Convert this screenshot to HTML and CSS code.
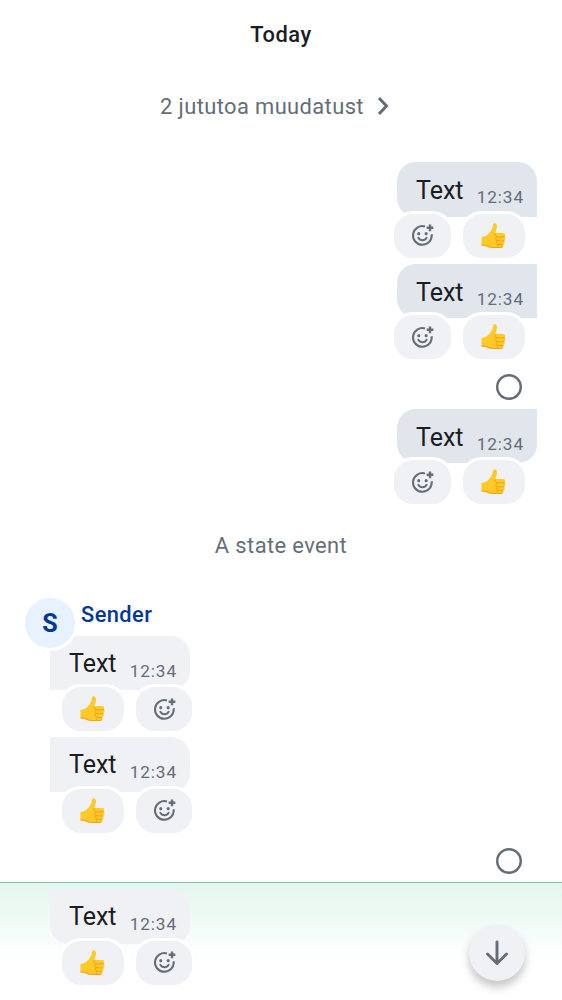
FILE: index.html
```html
<!DOCTYPE html>
<html lang="et">
<head>
<meta charset="utf-8">
<title>Timeline</title>
<link rel="stylesheet" href="styles.css">
</head>
<body>
<svg class="defs" aria-hidden="true">
  <symbol id="thumb" viewBox="0 0 26 28">
    <path d="M1.5 14.8Q4.5 14.7 6.7 13.2C9.1 11.4 11.7 8.4 12.5 5.7L13 2.8C13.3.4 16.9.8 17 4.2C17.1 7.1 15.5 9.4 15.3 10.9H22.7C25.1 10.9 25.8 13 24.7 14.4C25.9 15.7 25.5 17.7 24.3 18.6C25.1 20 24.5 21.8 23.2 22.4C23.8 24.4 22.6 26 20.5 26H13.3C9.5 26 7.5 24.4 5.4 23.7L1.5 23.6Z" fill="#ffc928"/>
    <path d="M1.5 23.6L5.4 23.7C7.5 24.4 9.5 26 13.3 26H20.5C22.3 26 23.4 24.8 23.2 23.2C22.4 24.8 21.5 25 19.8 25H13.3C9.6 25 7.3 22.7 4.6 22.5L1.5 22.4Z" fill="#f2a51b"/>
    <path d="M15.3 11.2C14.8 12.9 15.3 14.4 17 14.8C15.4 15.9 15.4 17.7 17 18.5C15.8 19.6 16.2 21.5 17.6 22.1C16.8 23.1 17.1 24.5 18.1 25M17 14.8Q21 15.6 24.6 14.4M17 18.5Q21 19.5 24.2 18.6M17.6 22.1Q20.5 23 23.1 22.4" fill="none" stroke="#eda116" stroke-width="1"/>
  </symbol>
  <symbol id="react" viewBox="0 0 24 24">
    <path d="M14.4 3.3A9 9 0 1 0 20.8 10.8" fill="none" stroke="#656d77" stroke-width="2"/>
    <path d="M19.2 1.4V7.8M16 4.6H22.4" stroke="#656d77" stroke-width="2.3"/>
    <circle cx="8.4" cy="10.2" r="1.5" fill="#656d77"/>
    <circle cx="15.5" cy="10.2" r="1.5" fill="#656d77"/>
    <path d="M8 14.2Q9.3 16.5 12 16.5T16 14.2" fill="none" stroke="#656d77" stroke-width="1.9" stroke-linecap="round"/>
  </symbol>
</svg>
<main class="timeline">
  <h1 class="day">Today</h1>
  <div class="changes"><span>2 jututoa muudatust</span>
    <svg class="chevron" viewBox="0 0 12 20"><path d="M2 2L9.5 10L2 18" fill="none" stroke="#656d77" stroke-width="3"/></svg>
  </div>
  <section class="group mine">
    <article class="message">
      <div class="bubble first"><span class="body">Text</span><time>12:34</time></div>
      <div class="reactions"><span class="pill add"><svg class="react"><use href="#react"/></svg></span><span class="pill"><svg class="thumb"><use href="#thumb"/></svg></span></div>
    </article>
    <article class="message">
      <div class="bubble middle"><span class="body">Text</span><time>12:34</time></div>
      <div class="reactions"><span class="pill add"><svg class="react"><use href="#react"/></svg></span><span class="pill"><svg class="thumb"><use href="#thumb"/></svg></span></div>
    </article>
    <div class="receipt"><span class="ring"></span></div>
    <article class="message">
      <div class="bubble last"><span class="body">Text</span><time>12:34</time></div>
      <div class="reactions"><span class="pill add"><svg class="react"><use href="#react"/></svg></span><span class="pill"><svg class="thumb"><use href="#thumb"/></svg></span></div>
    </article>
  </section>
  <p class="state">A state event</p>
  <section class="group theirs">
    <header class="sender"><span class="avatar">S</span><span class="name">Sender</span></header>
    <article class="message">
      <div class="bubble first"><span class="body">Text</span><time>12:34</time></div>
      <div class="reactions"><span class="pill"><svg class="thumb"><use href="#thumb"/></svg></span><span class="pill add"><svg class="react"><use href="#react"/></svg></span></div>
    </article>
    <article class="message">
      <div class="bubble middle"><span class="body">Text</span><time>12:34</time></div>
      <div class="reactions"><span class="pill"><svg class="thumb"><use href="#thumb"/></svg></span><span class="pill add"><svg class="react"><use href="#react"/></svg></span></div>
    </article>
    <div class="receipt"><span class="ring"></span></div>
  </section>
  <section class="group theirs focused">
    <article class="message">
      <div class="bubble last"><span class="body">Text</span><time>12:34</time></div>
      <div class="reactions"><span class="pill"><svg class="thumb"><use href="#thumb"/></svg></span><span class="pill add"><svg class="react"><use href="#react"/></svg></span></div>
    </article>
  </section>
  <button class="jump" aria-label="Jump to bottom"><svg viewBox="0 0 24 26"><path d="M12 2V23M2.5 14L12 23.5L21.5 14" fill="none" stroke="#656d77" stroke-width="2.9" stroke-linecap="round" stroke-linejoin="round"/></svg></button>
</main>
</body>
</html>
```

FILE: styles.css
```css
* { box-sizing: border-box; }
body {
  margin: 0;
  background: #fff;
  color: #1b1d22;
  font-family: Roboto, "Liberation Sans", sans-serif;
}
svg { display: block; }
.defs { position: absolute; width: 0; height: 0; }
.timeline {
  position: relative;
  height: 1000px;
  overflow: hidden;
  display: flex;
  flex-direction: column;
}
.day {
  margin: 0;
  height: 68px;
  line-height: 69px;
  text-align: center;
  font-size: 21.9px;
  font-weight: 500;
  letter-spacing: 0.5px;
}
.changes {
  height: 94.5px;
  padding: 24px 0 0 160px;
  display: flex;
  align-items: flex-start;
  gap: 13px;
  color: #656d77;
  font-size: 21.9px;
  line-height: 30px;
  letter-spacing: 0.4px;
}
.chevron { width: 12px; height: 20px; margin-top: 4px; }
.group { display: flex; flex-direction: column; }
.mine { padding-right: 25px; align-items: flex-end; }
.theirs { padding-left: 50px; align-items: flex-start; }
.message { height: 101.5px; }
.bubble {
  width: 140px;
  height: 54.5px;
  padding: 0 13px 0 19px;
  display: flex;
  align-items: flex-start;
  justify-content: space-between;
  background: #f0f1f5;
}
.mine .bubble { background: #e1e5ec; }
.body { padding-top: 1px; font-size: 25px; line-height: 54px; }
.mine .body { line-height: 55px; }
.bubble time {
  padding-top: 25px;
  color: #656d77;
  font-size: 17.2px;
  line-height: 20px;
  letter-spacing: 0.9px;
}
.mine .first { border-radius: 19px 19px 0 19px; }
.mine .middle { border-radius: 19px 0 0 19px; }
.mine .last { border-radius: 19px 0 19px 19px; }
.theirs .first, .theirs .middle { border-radius: 0 19px 19px 0; }
.theirs .last { border-radius: 0 19px 19px 19px; }
.reactions {
  position: relative;
  margin-top: -6px;
  display: flex;
  gap: 6px;
}
.mine .reactions { margin-left: -5.7px; }
.theirs .reactions { margin-left: 9px; }
.pill {
  width: 67.7px;
  height: 50px;
  display: flex;
  align-items: center;
  justify-content: center;
  background: #f0f1f5;
  border: 3px solid #fff;
  border-radius: 22px;
}
.pill.add { width: 62.7px; }
.thumb { width: 26px; height: 28px; margin-left: -2px; }
.react { width: 25px; height: 25px; }
.receipt { height: 43.5px; padding: 9px 15px 0; }
.ring {
  display: block;
  width: 26px;
  height: 26px;
  box-shadow: inset 0 0 0 2.4px #656d77;
  border-radius: 50%;
}
.state {
  margin: 0;
  height: 89px;
  padding-top: 21px;
  text-align: center;
  color: #656d77;
  font-size: 21.9px;
  line-height: 30px;
  letter-spacing: 0.4px;
}
.sender {
  position: relative;
  height: 37px;
  margin-left: -28px;
  display: flex;
  align-items: flex-start;
}
.avatar {
  flex: none;
  width: 56px;
  height: 56px;
  margin-top: -3.5px;
  border: 3px solid #fff;
  border-radius: 50%;
  background: #e7f1ff;
  color: #043894;
  font-size: 25px;
  font-weight: 700;
  line-height: 52px;
  text-align: center;
}
.name {
  margin-left: 3px;
  color: #043894;
  font-size: 21.9px;
  font-weight: 500;
  line-height: 31px;
  letter-spacing: 0.4px;
}
.theirs .receipt { align-self: flex-end; padding-right: 40px; }
.focused {
  height: 118px;
  padding-top: 6px;
  border-top: 1.5px solid #7fc2ae;
  background: linear-gradient(#e2f6ed, #fff 78px);
}
.jump {
  position: absolute;
  left: 468.6px;
  top: 925px;
  width: 56px;
  height: 56px;
  padding: 0;
  display: grid;
  place-items: center;
  border: 0;
  border-radius: 50%;
  background: #f0f1f5;
  box-shadow: 0 6px 10px rgba(0, 0, 0, 0.23);
}
.jump svg { width: 24px; height: 26px; }
```
